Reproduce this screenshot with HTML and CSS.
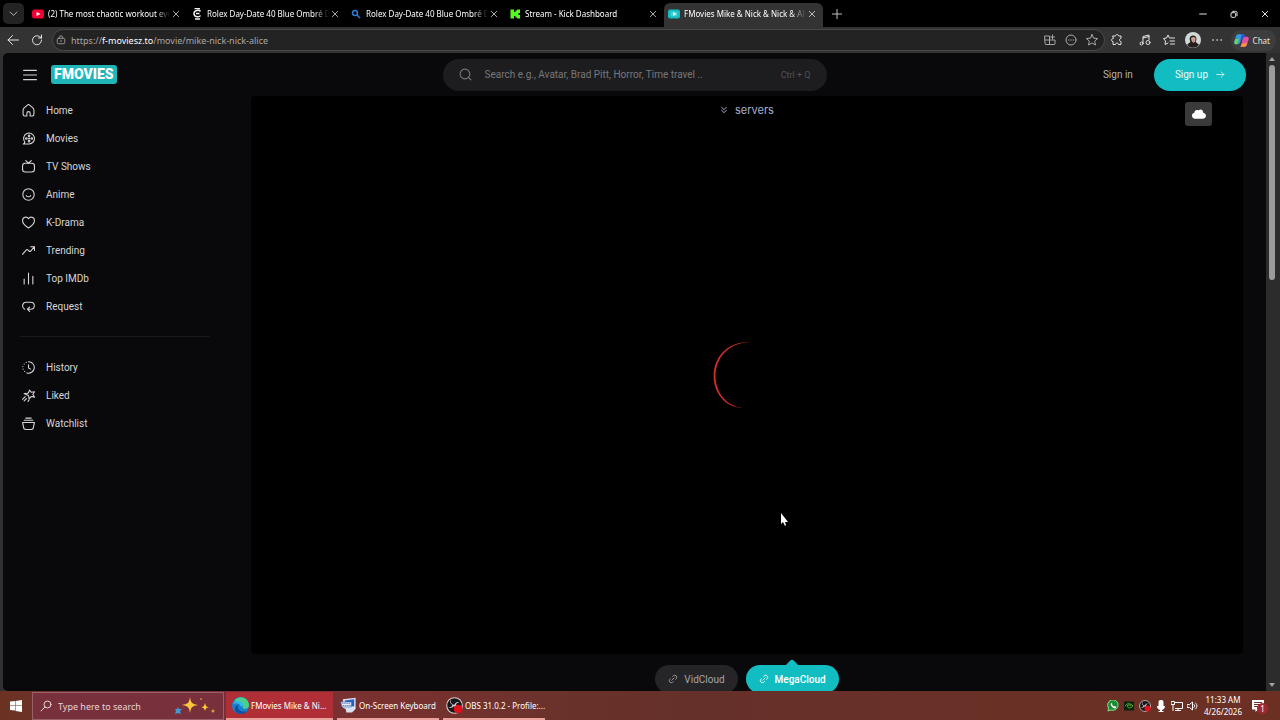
FILE: index.html
```html
<!DOCTYPE html>
<html lang="en">
<head>
    <meta charset="UTF-8">
    <meta name="viewport" content="width=device-width, initial-scale=1.0">
    <title>FMovies Mike &amp; Nick &amp; Nick &amp; Alice</title>
    <link rel="stylesheet" href="styles.css">
</head>
<body>
    <svg class="sprite" aria-hidden="true">
        <symbol id="i-close" viewBox="0 0 24 24"><path d="M4 4l16 16M20 4L4 20"/></symbol>
        <symbol id="i-link" viewBox="0 0 24 24"><path d="M9 15l6-6M11 6l2-2a5 5 0 0 1 7 7l-2 2M13 18l-2 2a5 5 0 0 1-7-7l2-2"/></symbol>
        <symbol id="i-search" viewBox="0 0 24 24"><circle cx="11" cy="11" r="9"/><path d="M18 18l4 4"/></symbol>
        <symbol id="i-obs" viewBox="0 0 24 24">
            <circle cx="12" cy="12" r="11" fill="#17171a" stroke="#d8d0d0" stroke-width="1.5"/>
            <path fill="#d8d0d0" stroke="none" d="M7 4c-1 5 2 7 5 7 1-3 4-5 8-3-2-1-5 0-6 3 3 2 4 6 1 9 1-4-1-6-4-7-3 3-6 3-8 1 3 1 6 0 6-3-3-1-4-5-2-7z"/>
            <circle cx="17" cy="17" r="6" fill="#e3101c" stroke="none"/>
        </symbol>
    </svg>

    <header class="tabs">
        <button class="tab-search" aria-label="Search tabs"><svg class="icon" viewBox="0 0 24 24"><path d="M3 8l9 9 9-9"/></svg></button>
        <div class="tab">
            <svg class="favicon" viewBox="0 0 24 24"><rect x="0" y="3" width="24" height="18" rx="5" fill="#f00033"/><path fill="#fff" d="M9 8l8 4-8 4z"/></svg>
            <span class="tab-title">(2) The most chaotic workout ever</span>
            <button class="tab-close" aria-label="Close tab"><svg class="icon"><use href="#i-close"/></svg></button>
        </div>
        <div class="tab">
            <svg class="favicon" viewBox="0 0 24 24"><path fill="none" stroke="#eee" stroke-width="3" d="M19 7c-2-3-13-4-13 4s11 8 13 4M7 1h11M8 22h10M10 11h7"/></svg>
            <span class="tab-title">Rolex Day-Date 40 Blue Ombré Di</span>
            <button class="tab-close" aria-label="Close tab"><svg class="icon"><use href="#i-close"/></svg></button>
        </div>
        <div class="tab">
            <svg class="favicon blue" viewBox="0 0 24 24"><circle cx="10" cy="10" r="5"/><path d="M14 14l6 6"/></svg>
            <span class="tab-title">Rolex Day-Date 40 Blue Ombré Di</span>
            <button class="tab-close" aria-label="Close tab"><svg class="icon"><use href="#i-close"/></svg></button>
        </div>
        <div class="tab">
            <svg class="favicon" viewBox="0 0 24 24"><path fill="#53fc18" d="M3 3h7v5h3V5h3V3h6v7h-3v4h3v7h-6v-2h-3v-3h-3v5H3z"/></svg>
            <span class="tab-title">Stream - Kick Dashboard</span>
            <button class="tab-close" aria-label="Close tab"><svg class="icon"><use href="#i-close"/></svg></button>
        </div>
        <div class="tab active">
            <svg class="favicon" viewBox="0 0 24 24"><rect x="0" y="3" width="24" height="18" rx="4" fill="#12bdc2"/><rect x="5" y="7" width="14" height="10" rx="2" fill="#3fd0d2"/><path fill="#e8ffff" d="M10 8l7 4-7 4z"/></svg>
            <span class="tab-title">FMovies Mike &amp; Nick &amp; Nick &amp; Ali</span>
            <button class="tab-close" aria-label="Close tab"><svg class="icon"><use href="#i-close"/></svg></button>
        </div>
        <button class="new-tab" aria-label="New tab"><svg class="icon" viewBox="0 0 24 24"><path d="M12 1v22M1 12h22"/></svg></button>
        <div class="window-controls">
            <button aria-label="Minimize"><svg class="icon" viewBox="0 0 24 24"><path d="M2 12h20"/></svg></button>
            <button aria-label="Restore"><svg class="icon" viewBox="0 0 24 24"><rect x="3" y="8" width="14" height="14" rx="3"/><path d="M8 4h9a4 4 0 0 1 4 4v9"/></svg></button>
            <button aria-label="Close"><svg class="icon"><use href="#i-close"/></svg></button>
        </div>
    </header>

    <div class="toolbar">
        <button class="tool" aria-label="Back"><svg class="icon" viewBox="0 0 24 24"><path d="M11 3l-9 9 9 9M2 12h21"/></svg></button>
        <button class="tool" aria-label="Reload"><svg class="icon" viewBox="0 0 24 24"><path d="M21 12a9 9 0 1 1-4-7l4 3M21 2v6h-6"/></svg></button>
        <div class="address">
            <svg class="icon lock" viewBox="0 0 24 24"><rect x="3" y="8" width="18" height="13" rx="3"/><path d="M8 8V6a4 4 0 0 1 8 0v2M12 13v3"/></svg>
            <a class="url" href="#">https://<b>f-moviesz.to</b>/movie/mike-nick-nick-alice</a>
            <button aria-label="Apps"><svg class="icon" viewBox="0 0 24 24"><path d="M2 4h9v17H4a2 2 0 0 1-2-2zM2 12h20v7a2 2 0 0 1-2 2h-9M17 2v8M13 6h8"/></svg></button>
            <button aria-label="Page actions"><svg class="icon" viewBox="0 0 24 24"><circle cx="12" cy="12" r="10"/><path d="M7 12h1M11.500 12h1M16 12h1"/></svg></button>
            <button aria-label="Add to favorites"><svg class="icon" viewBox="0 0 24 24"><path d="M12 1l3.300 7.300 8 .7-6 5.300 1.800 7.700L12 18l-7.100 4 1.800-7.700-6-5.300 8-.7z"/></svg></button>
        </div>
        <div class="extensions">
            <button class="puzzle" aria-label="Extensions"><svg class="icon" viewBox="0 0 24 24"><path d="M4 4h5c0-4 6-4 6 0h5v5c-4 0-4 6 0 6v6h-5c0-4-6-4-6 0H4v-6c-4 0-4-6 0-6z"/></svg></button>
            <button aria-label="Music"><svg class="icon" viewBox="0 0 24 24"><path d="M8 18V5l12-3v9M8 8l12-3"/><circle cx="5" cy="19" r="3"/><circle cx="18" cy="17" r="4"/></svg></button>
            <button aria-label="Favorites"><svg class="icon" viewBox="0 0 24 24"><path d="M13 8l-3-6-3 6-6 1 4 5-1 7 6-3M15 8h8M14 14h9M15 20h8"/></svg></button>
            <button class="avatar" aria-label="Profile"><svg viewBox="0 0 24 24"><circle cx="12" cy="12" r="12" fill="#cfd8d6"/><path fill="#241d1d" d="M7 11c-1-8 12-8 10 1l-1 3 5 4c-4 6-14 6-18 0l5-4z"/><path fill="#c99b8c" d="M9 9c2-2 5-2 7 0 0 4-1 7-3 7s-4-3-4-7z"/></svg></button>
            <button aria-label="More"><svg class="icon dots" viewBox="0 0 24 24"><path d="M4 12h.5M12 12h.5M20 12h.5"/></svg></button>
        </div>
        <button class="chat">
            <svg viewBox="0 0 24 24"><path fill="#2d9be8" d="M7 2h8c-3 1-3 5-4 9-1 5-2 7-6 7H3c-3 0-3-3-2-6l2-6c1-3 2-4 4-4z"/><path fill="#74d34b" d="M2 10l6-1-3 9H3c-3 0-3-3-1-8z"/><path fill="#e24fa5" d="M17 22H9c3-1 3-5 4-9 1-5 2-7 6-7h2c3 0 3 3 2 6l-2 6c-1 3-2 4-4 4z"/><path fill="#f49a3a" d="M12 17l9-1c-1 4-2 6-4 6H9c2 0 3-2 3-5z"/><path fill="#3156cf" d="M12 2h3c2 0 2 2 3 4-3 0-4 2-5 5l-3 1z"/></svg>
            Chat
        </button>
    </div>

    <div class="viewport">
        <div class="page">
            <div class="site-header">
                <div class="brand">
                    <button aria-label="Menu"><svg class="icon" viewBox="0 0 24 24"><path d="M1 4h22M1 12h22M1 20h22"/></svg></button>
                    <a class="logo" href="#">FMOVIES</a>
                </div>
                <div class="search">
                    <svg class="icon"><use href="#i-search"/></svg>
                    <input type="text" aria-label="Search" placeholder="Search e.g., Avatar, Brad Pitt, Horror, Time travel ..">
                    <span class="shortcut">Ctrl + Q</span>
                </div>
                <div class="account">
                    <a class="sign-in" href="#">Sign in</a>
                    <a class="sign-up" href="#">Sign up <svg class="icon" viewBox="0 0 24 24"><path d="M2 12h19M14 5l7 7-7 7"/></svg></a>
                </div>
            </div>

            <div class="content">
                <nav class="sidebar">
                    <a href="#"><svg class="icon" viewBox="0 0 24 24"><path d="M9 22H5a3 3 0 0 1-3-3v-8c0-2 1-3 2-4l6-5c1-1 3-1 4 0l6 5c1 1 2 2 2 4v8a3 3 0 0 1-3 3h-4v-5a3 3 0 0 0-6 0z"/></svg>Home</a>
                    <a href="#"><svg class="icon" viewBox="0 0 24 24"><path d="M2 22h11a10 10 0 1 0-8-4c0 2-1 4-3 4z"/><circle cx="13" cy="12" r="1"/><circle cx="13" cy="7" r="1.500"/><circle cx="13" cy="17" r="1.500"/><circle cx="8" cy="12" r="1.500"/><circle cx="18" cy="12" r="1.500"/></svg>Movies</a>
                    <a href="#"><svg class="icon" viewBox="0 0 24 24"><rect x="1" y="6" width="22" height="16" rx="5"/><path d="M7 1l5 5 5-5"/></svg>TV Shows</a>
                    <a href="#"><svg class="icon" viewBox="0 0 24 24"><circle cx="12" cy="12" r="10.500"/><path d="M8 14c1 3 7 3 8 0"/></svg>Anime</a>
                    <a href="#"><svg class="icon" viewBox="0 0 24 24"><path d="M12 22C7 19 1 14 1 8.500 1 2 9 0 12 5c3-5 11-3 11 3.500C23 14 17 19 12 22z"/></svg>K-Drama</a>
                    <a href="#"><svg class="icon" viewBox="0 0 24 24"><path d="M1 19l7-8c1-1 2-1 3 0l2 2c1 1 2 1 3 0l7-8M16 5h7v7"/></svg>Trending</a>
                    <a href="#"><svg class="icon" viewBox="0 0 24 24"><path d="M4 13v9M12 2v20M20 8v14"/></svg>Top IMDb</a>
                    <a href="#"><svg class="icon" viewBox="0 0 24 24"><path d="M5 17C-1 14 0 4 8 4h8c9 0 9 13 0 13h-5M14 13l-4 4 4 4"/></svg>Request</a>
                    <hr>
                    <a href="#"><svg class="icon" viewBox="0 0 24 24"><path d="M12 1.500a10.500 10.500 0 1 1-3 20.500M12 7v6l4 2M8 2.500v.2M4 5.500v.2M1.500 10v.2M2 15v.2M5 19v.2"/></svg>History</a>
                    <a href="#"><svg class="icon" viewBox="0 0 24 24"><path d="M14 2l3 4 6-1-3 5 3 5-6-1-4 4-1-6-5-2 5-3zM7 8l-3 1M6 14l-5 5M8 18l-4 4M13 20l-2 3"/></svg>Liked</a>
                    <a href="#"><svg class="icon" viewBox="0 0 24 24"><path d="M1 10h22l-2 9c0 2-2 4-4 4H7c-2 0-4-2-4-4zM4 6h16M7 2h10"/></svg>Watchlist</a>
                </nav>

                <main class="main">
                    <div class="player">
                        <button class="servers-toggle"><svg class="icon" viewBox="0 0 24 24"><path d="M5 4l7 7 7-7M5 13l7 7 7-7"/></svg>servers</button>
                        <button class="cloud" aria-label="Cloud"><svg viewBox="0 0 24 24"><path fill="#fff" d="M6 20a5 5 0 0 1-2-10c0-4 4-6 7-4 4-4 9 0 8 4 7 1 6 10 0 10z"/></svg></button>
                        <svg class="spinner" viewBox="0 0 68 68"><path fill="#d02e28" d="M39 1C-10 -2 -11 65 30 67C-8 63 -8 1 39 1z"/></svg>
                    </div>
                    <div class="servers">
                        <button><svg class="icon"><use href="#i-link"/></svg>VidCloud</button>
                        <button class="selected"><svg class="icon"><use href="#i-link"/></svg>MegaCloud</button>
                    </div>
                </main>
            </div>
        </div>
        <div class="scrollbar">
            <span class="arrow up"></span>
            <div class="track"><div class="thumb"></div></div>
            <span class="arrow down"></span>
        </div>
    </div>

    <footer class="taskbar">
        <button class="start" aria-label="Start"><svg viewBox="0 0 24 24"><path fill="#fff" d="M0 3l10-1v9H0zM11 2l13-2v11H11zM0 12h10v9L0 20zM11 12h13v12l-13-2z"/></svg></button>
        <div class="task-search">
            <svg class="icon" viewBox="0 0 24 24"><circle cx="15" cy="9" r="7"/><path d="M10 14l-8 8"/></svg>
            <input type="text" aria-label="Windows search" placeholder="Type here to search">
            <svg class="sparkles" viewBox="0 0 42 18"><path fill="#ffc63a" d="M16 0c1 6 2 7 8 8-6 1-7 2-8 8-1-6-2-7-8-8 6-1 7-2 8-8zM31 6c1 3 1 4 4 4-3 1-3 1-4 4-1-3-1-3-4-4 3 0 3-1 4-4z"/><path fill="#3f9bd8" d="M4 10l1 2 3 0-2 2 1 3-3-1-3 1 1-3-1-2 2 0z"/><circle cx="27" cy="2" r="1" fill="#e0782e"/><circle cx="39" cy="14" r="1.500" fill="#e09a3e"/></svg>
        </div>
        <button class="task current">
            <svg viewBox="0 0 24 24"><circle cx="12" cy="12" r="12" fill="#1682cf"/><path fill="#4bd08b" d="M3 6C9-4 24 0 24 12c0 5-7 6-9 3 3-6-5-11-12-9z"/><path fill="#35b9e9" d="M1 10C5 2 15 5 16 12l-3 2c-1-4-7-7-12-4z"/><path fill="#0c4f9e" d="M9 11c-3 6 3 11 12 9-7 7-17 3-17-3 0-3 2-5 5-6z"/></svg>
            <span>FMovies Mike &amp; Ni...</span>
        </button>
        <button class="task">
            <svg viewBox="0 0 24 24"><path fill="#d7e2f2" d="M4 3l18-2v16l-5 5H9l-1-5-4-2z"/><path fill="#2b5bc4" d="M7 5l13-2v10L7 14z"/><path fill="#e9edf5" stroke="#4a74b8" d="M1 7h15v7H3z"/><path stroke="#2b5bc4" stroke-dasharray="2 1" d="M3 9h12M4 12h11"/></svg>
            <span>On-Screen Keyboard</span>
        </button>
        <button class="task">
            <svg><use href="#i-obs"/></svg>
            <span>OBS 31.0.2 - Profile:...</span>
        </button>
        <div class="tray">
            <svg viewBox="0 0 24 24"><path fill="#1f8a35" stroke="#7ee08a" stroke-width="2" d="M2 22l1-6a10.500 10.500 0 1 1 5 4z"/><path fill="#fff" d="M8 6c-3 3 4 12 9 11l2-3-4-2-2 1-3-4 1-1z"/></svg>
            <svg viewBox="0 0 24 24"><rect x="2" y="3" width="20" height="18" fill="#0d2110"/><path fill="none" stroke="#4fb52c" stroke-width="2" d="M4 12c4-6 11-6 16 0-5 5-10 5-12 0 3-3 6-3 8 0"/></svg>
            <svg><use href="#i-obs"/></svg>
            <svg viewBox="0 0 24 24"><rect x="7" y="0" width="10" height="16" rx="4" fill="#fff"/><path fill="#fff" d="M4 12h16c0 5-3 7-6 8v2h3v2H7v-2h3v-2c-3-1-6-3-6-8z"/></svg>
            <svg class="icon" viewBox="0 0 24 24"><path d="M9 5h14v12H9M14 17v4M9 21h10M1 3h6v6H1zM4 9v12"/></svg>
            <svg class="icon" viewBox="0 0 24 24"><path d="M1 9h4l6-5v16l-6-5H1zM14 9c2 2 2 4 0 6M17 6c4 4 4 8 0 12"/></svg>
            <div class="clock"><span>11:33 AM</span><span>4/26/2026</span></div>
            <button class="notifications" aria-label="Notifications">
                <svg viewBox="0 0 24 24"><path fill="#fff" d="M0 0h24v19H12l-5 5v-5H0z"/><path stroke="#6b3028" stroke-width="2" d="M4 5h16M4 9h16M4 13h12"/></svg>
                <span class="badge">1</span>
            </button>
        </div>
    </footer>

    <svg class="cursor" viewBox="0 0 8 13"><path fill="#fff" d="M1 0v11l2-2 2 4 1-1-1-3h3z"/></svg>
</body>
</html>
```
FILE: styles.css
```css
* {
    box-sizing: border-box;
}
body {
    display: flex;
    flex-direction: column;
    height: 100vh;
    margin: 0;
    overflow: hidden;
    background-color: #000;
    color: #e4e4e4;
    font-family: "Noto Sans", sans-serif;
    font-size: 8px;
}
button {
    display: flex;
    align-items: center;
    justify-content: center;
    flex: none;
    padding: 0;
    border: none;
    background: none;
    color: inherit;
    font: inherit;
}
a {
    color: inherit;
    text-decoration: none;
}
input {
    flex: 1;
    min-width: 0;
    padding: 0;
    border: none;
    outline: none;
    background: none;
    color: inherit;
    font: inherit;
}
input::placeholder {
    color: inherit;
    opacity: 1;
}
svg {
    display: block;
    flex: none;
    width: 12px;
    height: 12px;
}
.icon {
    fill: none;
    stroke: currentColor;
    stroke-width: 2;
    stroke-linecap: round;
    stroke-linejoin: round;
}
.sprite {
    display: none;
}

/* browser tabs */
.tabs {
    display: flex;
    align-items: center;
    flex: none;
    height: 27px;
    padding-left: 3px;
}
.tab-search {
    width: 21px;
    height: 21px;
    margin-right: 4px;
    border-radius: 5px;
    background-color: #232323;
}
.tab-search .icon {
    width: 9px;
    height: 9px;
}
.tab {
    display: flex;
    align-items: center;
    flex: 0 1 159px;
    min-width: 0;
    height: 24px;
    margin-top: 3px;
    padding: 0 5px 3px 4px;
    color: #fff;
}
.tab.active {
    border-radius: 6px 6px 0 0;
    background-color: #333;
}
.favicon {
    margin-right: 4px;
}
.blue {
    fill: none;
    stroke: #2b7cd3;
    stroke-width: 3;
}
.tab-title {
    flex: 1;
    min-width: 0;
    white-space: nowrap;
    mask-image: linear-gradient(to right, #000 88%, transparent);
}
.tab-close {
    width: 12px;
    height: 12px;
}
.tab-close .icon {
    width: 8px;
    height: 8px;
}
.new-tab {
    width: 28px;
}
.new-tab .icon {
    width: 10px;
    height: 10px;
}
.window-controls {
    display: flex;
    margin-left: auto;
}
.window-controls button {
    width: 31px;
}
.window-controls .icon {
    width: 8px;
    height: 8px;
    stroke-width: 3;
}

/* browser toolbar */
.toolbar {
    display: flex;
    align-items: center;
    flex: none;
    height: 26px;
    padding: 0 4px 0 1px;
    background-color: #333;
}
.tool {
    width: 24px;
}
.address {
    display: flex;
    align-items: center;
    flex: 1;
    height: 22px;
    margin-left: 3px;
    padding: 0 1px 0 3px;
    border: 1px solid #484848;
    border-radius: 11px;
    background-color: #232323;
    color: #a8a8a8;
}
.lock {
    width: 10px;
    height: 10px;
    margin-right: 5px;
}
.url {
    flex: 1;
    font-size: 9px;
}
.url b {
    color: #fff;
    font-weight: normal;
}
.address button {
    width: 21px;
}
.extensions {
    display: flex;
    align-items: center;
    margin-right: 2px;
}
.extensions button {
    width: 24px;
}
.extensions .puzzle {
    margin-right: 4px;
}
.avatar svg {
    width: 16px;
    height: 16px;
}
.dots {
    stroke-width: 3;
}
.chat {
    gap: 4px;
    height: 21px;
    padding: 0 6px 0 3px;
    border-radius: 10px;
    background-color: #3d3d3d;
}
.chat svg {
    width: 15px;
    height: 15px;
}

/* page area */
.viewport {
    display: flex;
    flex: 1;
    min-height: 0;
    border-left: 3px solid #303030;
    background-color: #303030;
}
.page {
    flex: 1;
    min-width: 0;
    overflow: hidden;
    border-radius: 5px 0 0 5px;
    background-color: #09090b;
    color: #d6d6d8;
    font-family: Roboto, Inter, sans-serif;
    font-size: 10px;
}
.site-header {
    display: grid;
    grid-template-columns: 1fr minmax(0, 384px) 1fr;
    align-items: center;
    height: 43px;
    padding: 0 20px;
}
.brand {
    display: flex;
    align-items: center;
    gap: 14px;
}
.brand .icon {
    width: 14px;
    height: 14px;
}
.logo {
    padding: 0 3px;
    border-radius: 3px;
    background-color: #1fb5b9;
    color: #fff;
    font-size: 14px;
    font-weight: 900;
    line-height: 19px;
}
.search {
    display: flex;
    align-items: center;
    gap: 13px;
    height: 32px;
    padding: 0 16px;
    border-radius: 16px;
    background-color: #1d1d1f;
    color: #77777a;
}
.search .icon {
    width: 13px;
    height: 13px;
}
.shortcut {
    color: #515154;
    font-size: 9px;
}
.account {
    display: flex;
    align-items: center;
    justify-content: flex-end;
    gap: 21px;
}
.sign-in {
    color: #b4b4b6;
}
.sign-up {
    display: flex;
    align-items: center;
    gap: 8px;
    height: 32px;
    padding: 0 21px;
    border-radius: 16px;
    background-color: #12bdc2;
    color: #eefcfc;
}
.sign-up .icon {
    width: 9px;
    height: 9px;
}
.content {
    display: flex;
}
.sidebar {
    width: 207px;
    margin-right: 41px;
    padding-left: 17px;
}
.sidebar a {
    display: flex;
    align-items: center;
    gap: 11px;
    height: 28px;
    padding-left: 2px;
}
.sidebar .icon {
    width: 13px;
    height: 13px;
}
.sidebar hr {
    height: 1px;
    margin: 16px 0;
    border: none;
    background-color: #19191b;
}
.main {
    flex: 1;
    margin-right: 23px;
}
.player {
    position: relative;
    display: flex;
    align-items: center;
    justify-content: center;
    aspect-ratio: 16 / 9;
    border-radius: 4px;
    background-color: #000;
}
.servers-toggle {
    position: absolute;
    top: 7px;
    left: 0;
    right: 0;
    gap: 7px;
    color: #a7b0d0;
    font-family: Inter, sans-serif;
    font-size: 11px;
}
.servers-toggle .icon {
    width: 8px;
    height: 8px;
    stroke-width: 3;
}
.cloud {
    position: absolute;
    top: 6px;
    right: 31px;
    width: 27px;
    height: 24px;
    border-radius: 3px;
    background-color: #3a3a3a;
}
.cloud svg {
    width: 14px;
    height: 14px;
}
.spinner {
    width: 68px;
    height: 68px;
}
.servers {
    display: flex;
    justify-content: center;
    gap: 8px;
    padding-top: 11px;
}
.servers button {
    gap: 6px;
    height: 28px;
    padding: 0 13px;
    border-radius: 14px;
    background-color: #252527;
    color: #a6a6a8;
}
.servers .icon {
    width: 10px;
    height: 10px;
}
.servers .selected {
    position: relative;
    background-color: #12bdc2;
    color: #fff;
    font-weight: 500;
}
.selected::before {
    content: "";
    position: absolute;
    top: -4px;
    left: calc(50% - 5px);
    width: 10px;
    height: 10px;
    border-radius: 2px;
    background-color: inherit;
    transform: rotate(45deg);
}
.scrollbar {
    display: flex;
    flex-direction: column;
    align-items: center;
    width: 14px;
    padding: 4px 3px 4px 0;
    background-color: #2c2c2c;
}
.arrow {
    border: 3px solid transparent;
}
.up {
    border-top: none;
    border-bottom: 4px solid #a0a0a0;
}
.down {
    border-bottom: none;
    border-top: 4px solid #a0a0a0;
}
.track {
    flex: 1;
    padding: 4px 0;
}
.thumb {
    width: 6px;
    height: 35%;
    border-radius: 3px;
    background-color: #9b9b9b;
}

/* taskbar */
.taskbar {
    display: flex;
    flex: none;
    height: 29px;
    padding-top: 1px;
    background: linear-gradient(to right, #6b3222, #74303a 12%, #78303a 20%, #79312e 30%, #68322a 45%, #66302a 55%, #6c3023);
    color: #fff;
}
.start {
    width: 32px;
}
.task-search {
    display: flex;
    align-items: center;
    width: 192px;
    margin-right: 2px;
    padding: 0 7px;
    border: 1px solid #98606a;
    background-color: #77303c;
    color: #e8d3d6;
    font-size: 9px;
}
.task-search .icon {
    margin-right: 6px;
}
.sparkles {
    width: 42px;
    height: 18px;
}
.task {
    justify-content: flex-start;
    gap: 2px;
    width: 102px;
    margin-right: 4px;
    padding-left: 3px;
    border-bottom: 2px solid #e9a39c;
    white-space: nowrap;
}
.task svg {
    width: 17px;
    height: 17px;
}
.task.current {
    width: 107px;
    padding-left: 6px;
    background-color: #b02e36;
}
.tray {
    display: flex;
    align-items: center;
    gap: 4px;
    margin-left: auto;
    padding-right: 16px;
}
.clock {
    display: flex;
    flex-direction: column;
    align-items: center;
    width: 40px;
    margin-right: 5px;
    line-height: 12px;
}
.notifications {
    position: relative;
}
.badge {
    position: absolute;
    top: 3px;
    left: 5px;
    width: 11px;
    border-radius: 6px;
    background-color: #a32631;
    line-height: 11px;
}

.cursor {
    position: absolute;
    top: 513px;
    left: 780px;
    width: 8px;
    height: 13px;
}
```
